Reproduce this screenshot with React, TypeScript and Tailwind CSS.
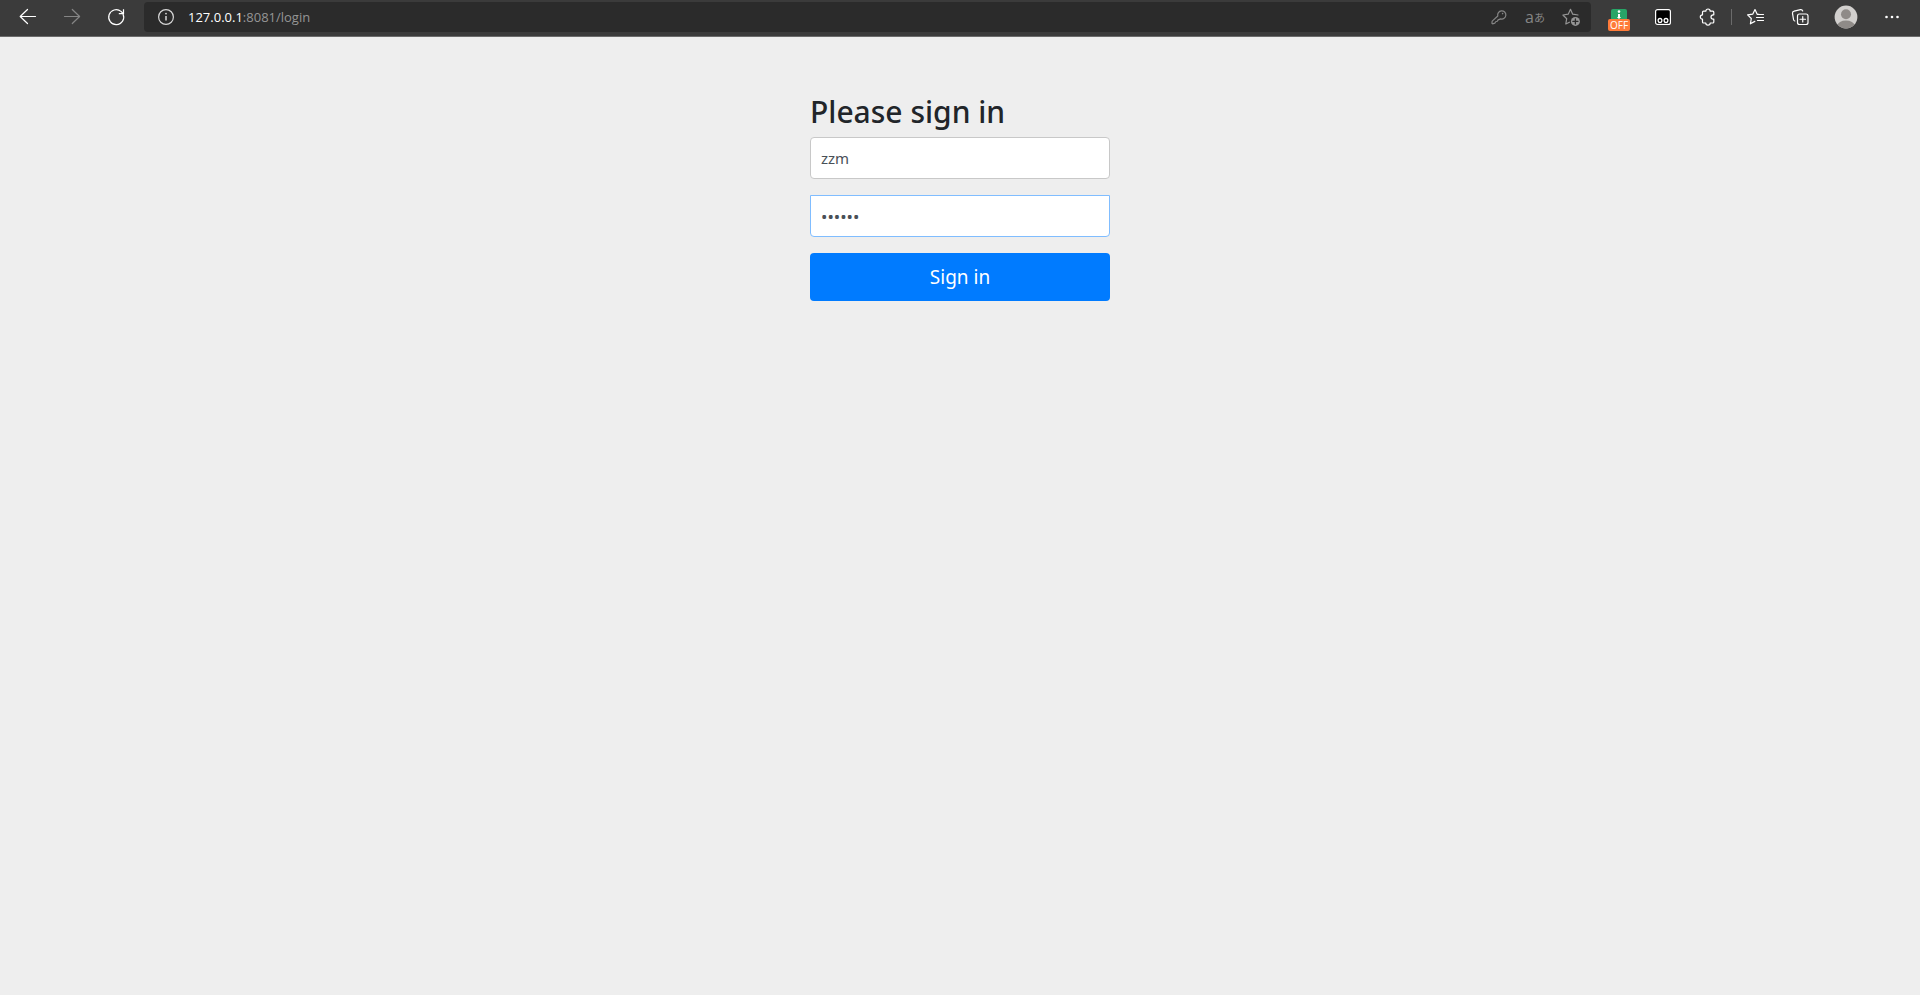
import React, { useState } from "react";

type IconButtonProps = {
  label: string;
  className?: string;
  disabled?: boolean;
  children: React.ReactNode;
};

function IconButton({ label, className = "w-11", disabled, children }: IconButtonProps) {
  return (
    <button
      type="button"
      aria-label={label}
      disabled={disabled}
      className={`flex h-[30px] shrink-0 items-center justify-center ${className}`}
    >
      {children}
    </button>
  );
}

function Icon({ className = "text-white", children }: { className?: string; children: React.ReactNode }) {
  return (
    <svg
      aria-hidden="true"
      viewBox="0 0 24 24"
      fill="none"
      stroke="currentColor"
      strokeWidth="1.2"
      strokeLinecap="round"
      strokeLinejoin="round"
      className={`size-6 shrink-0 ${className}`}
    >
      {children}
    </svg>
  );
}

function Toolbar() {
  return (
    <header className="flex h-[37px] items-center border-b border-[#6b6b6b] bg-[#3b3b3b] pb-0.5 pl-1.5 pr-1.5">
      <IconButton label="Back">
        <Icon>
          <path d="M19.5 11.5H4.5M11.5 4.5l-7.3 7 7.3 7" />
        </Icon>
      </IconButton>
      <IconButton label="Forward" disabled>
        <Icon className="text-[#858585]">
          <path d="M4.5 11.5h15M12.3 4.5l7.3 7-7.3 7" />
        </Icon>
      </IconButton>
      <IconButton label="Refresh">
        <Icon>
          <path d="M19.1 9.2A7.5 7.5 0 1 1 17 6.4l2.2 2.1" />
          <path d="M19.5 4.2v4.5h-4.7" strokeLinecap="butt" strokeLinejoin="miter" />
        </Icon>
      </IconButton>

      <div className="ml-1.5 flex h-[30px] min-w-0 flex-1 items-center rounded bg-[#2b2b2b] pl-2.5 pr-0.5">
        <Icon className="text-[#d8d8d8]">
          <circle cx="12" cy="12" r="7.4" />
          <path d="M12 11v4.6" strokeWidth="1.5" strokeLinecap="butt" />
          <circle cx="12" cy="8.6" r="0.9" fill="currentColor" stroke="none" />
        </Icon>
        <div className="ml-2.5 flex-1 truncate font-['Open_Sans','Noto_Sans',sans-serif] text-[13px] leading-5 text-[#959595]">
          <span className="text-white">127.0.0.1</span>:8081/login
        </div>
        <IconButton label="Saved passwords" className="w-9">
          <Icon className="text-[#858585]">
            <path d="M10.8 11a4.1 4.1 0 1 1 2.9 2.9l-2.6 1-.8 1.3-1.6.5-.9 1.5-2.2.6-.7-.5.3-2.2z" />
            <circle cx="15.6" cy="8.6" r="0.8" fill="currentColor" stroke="none" />
          </Icon>
        </IconButton>
        <IconButton label="Translate" className="w-9">
          <span className="flex items-center text-[#858585]">
            <span className="font-['Open_Sans',sans-serif] text-base leading-5">a</span>
            <span className="font-['Noto_Sans_CJK_JP',sans-serif] text-[11px] leading-5">あ</span>
          </span>
        </IconButton>
        <IconButton label="Add to favorites" className="w-9">
          <Icon className="text-[#959595]">
            <path d="M19 10l-5.3-.8L11.5 4.3 9.2 9.2l-5.3.8 3.8 3.7-.9 5.3 3.6-1.8" />
            <circle cx="16.4" cy="16.4" r="4.5" fill="currentColor" stroke="none" />
            <path d="M16.4 13.9v5M13.9 16.4h5" stroke="#2b2b2b" strokeWidth="1.3" />
          </Icon>
        </IconButton>
      </div>

      <IconButton label="Download manager extension, off" className="ml-1.5 w-11">
        <span className="flex flex-col items-center pt-1.5">
          <svg aria-hidden="true" viewBox="0 0 16 10" className="h-2.5 w-4">
            <path d="M0 10V2a2 2 0 0 1 2-2h12a2 2 0 0 1 2 2v8z" fill="#27a567" />
            <circle cx="8" cy="2.6" r="1.3" fill="#fff" />
            <path d="M7 5h2v3h1.2L8 10 5.8 8H7z" fill="#fff" />
          </svg>
          <span className="h-3 w-[22px] rounded-xs bg-[#ff7b39] text-center font-['Open_Sans',sans-serif] text-[10px] leading-3 text-white">
            OFF
          </span>
        </span>
      </IconButton>
      <IconButton label="Script manager extension">
        <Icon>
          <rect x="4.6" y="4.6" width="14.8" height="14.8" rx="2" fill="#000" />
          <circle cx="9" cy="15.4" r="1.9" strokeWidth="1.3" />
          <circle cx="15" cy="15.4" r="1.9" strokeWidth="1.3" />
        </Icon>
      </IconButton>
      <IconButton label="Extensions">
        <Icon>
          <path d="M8.5 6.2h2.3a2.2 2.2 0 0 1 4.4 0h2.6a1 1 0 0 1 1 1v2.6h-.6a2.2 2.2 0 0 0 0 4.4h.6v2.8a1 1 0 0 1-1 1h-2.6a2.2 2.2 0 0 1-4.4 0H8.5a1 1 0 0 1-1-1v-2.8a2.2 2.2 0 0 1 0-4.4V7.2a1 1 0 0 1 1-1z" />
        </Icon>
      </IconButton>
      <div className="mx-0.5 h-4 w-px shrink-0 bg-[#6b6b6b]" />
      <IconButton label="Favorites">
        <Icon>
          <path d="M15 9.3h-1.8L11 4.5 8.7 9.2l-5.1.7 3.7 3.6-.9 5.3 4.4-2.4" />
          <path d="M13.5 9.5h6M12.5 12.5h7M13.5 15.5h6" />
        </Icon>
      </IconButton>
      <IconButton label="Collections">
        <Icon>
          <rect x="9.5" y="9" width="10.5" height="10.5" rx="2" />
          <path d="M14.75 11.5v5.5M12 14.25h5.5" />
          <path d="M6.8 16a2 2 0 0 1-1.3-1.5l-1-6.2a2 2 0 0 1 1.6-2.2l6.4-1.5a2 2 0 0 1 2.2 1.4" />
        </Icon>
      </IconButton>
      <IconButton label="Profile" className="w-12">
        <svg aria-hidden="true" viewBox="0 0 24 24" className="size-6">
          <defs>
            <clipPath id="avatar-clip">
              <circle cx="12" cy="12" r="11.4" />
            </clipPath>
          </defs>
          <circle cx="12" cy="12" r="11.4" fill="#d2d0ce" />
          <g clipPath="url(#avatar-clip)" fill="#8f8b88">
            <circle cx="12" cy="9.2" r="5" />
            <ellipse cx="12" cy="20.2" rx="8.4" ry="4.6" />
          </g>
        </svg>
      </IconButton>
      <IconButton label="Settings and more">
        <Icon>
          <g fill="currentColor" stroke="none">
            <circle cx="6.5" cy="12" r="1.3" />
            <circle cx="12" cy="12" r="1.3" />
            <circle cx="17.5" cy="12" r="1.3" />
          </g>
        </Icon>
      </IconButton>
    </header>
  );
}

function SignInForm() {
  const [username, setUsername] = useState("zzm");
  const [password, setPassword] = useState("secret");
  return (
    <form
      className="mx-auto flex w-full max-w-[330px] flex-col gap-4 p-[15px]"
      onSubmit={(event) => event.preventDefault()}
    >
      <div>
        <h2 className="mb-[5px] text-[30px] font-medium leading-10 text-[#212529]">Please sign in</h2>
        <input
          type="text"
          aria-label="Username"
          value={username}
          onChange={(event) => setUsername(event.target.value)}
          className="block h-[42px] w-full rounded border border-[#c8c8c8] bg-white px-2.5 text-[15px] text-[#495057] outline-none"
        />
      </div>
      <input
        type="password"
        aria-label="Password"
        value={password}
        onChange={(event) => setPassword(event.target.value)}
        className="block h-[42px] w-full rounded-b border border-[#80bdff] bg-white px-2.5 text-[17px] text-[#495057] outline-none"
      />
      <button type="submit" className="h-12 w-full rounded bg-[#007bff] text-[19px] text-white">
        Sign in
      </button>
    </form>
  );
}

export default function App() {
  return (
    <div className="flex min-h-screen flex-col bg-[#eeeeee] font-['Noto_Sans','Open_Sans',sans-serif]">
      <Toolbar />
      <main className="flex-1 pt-10">
        <SignInForm />
      </main>
    </div>
  );
}
